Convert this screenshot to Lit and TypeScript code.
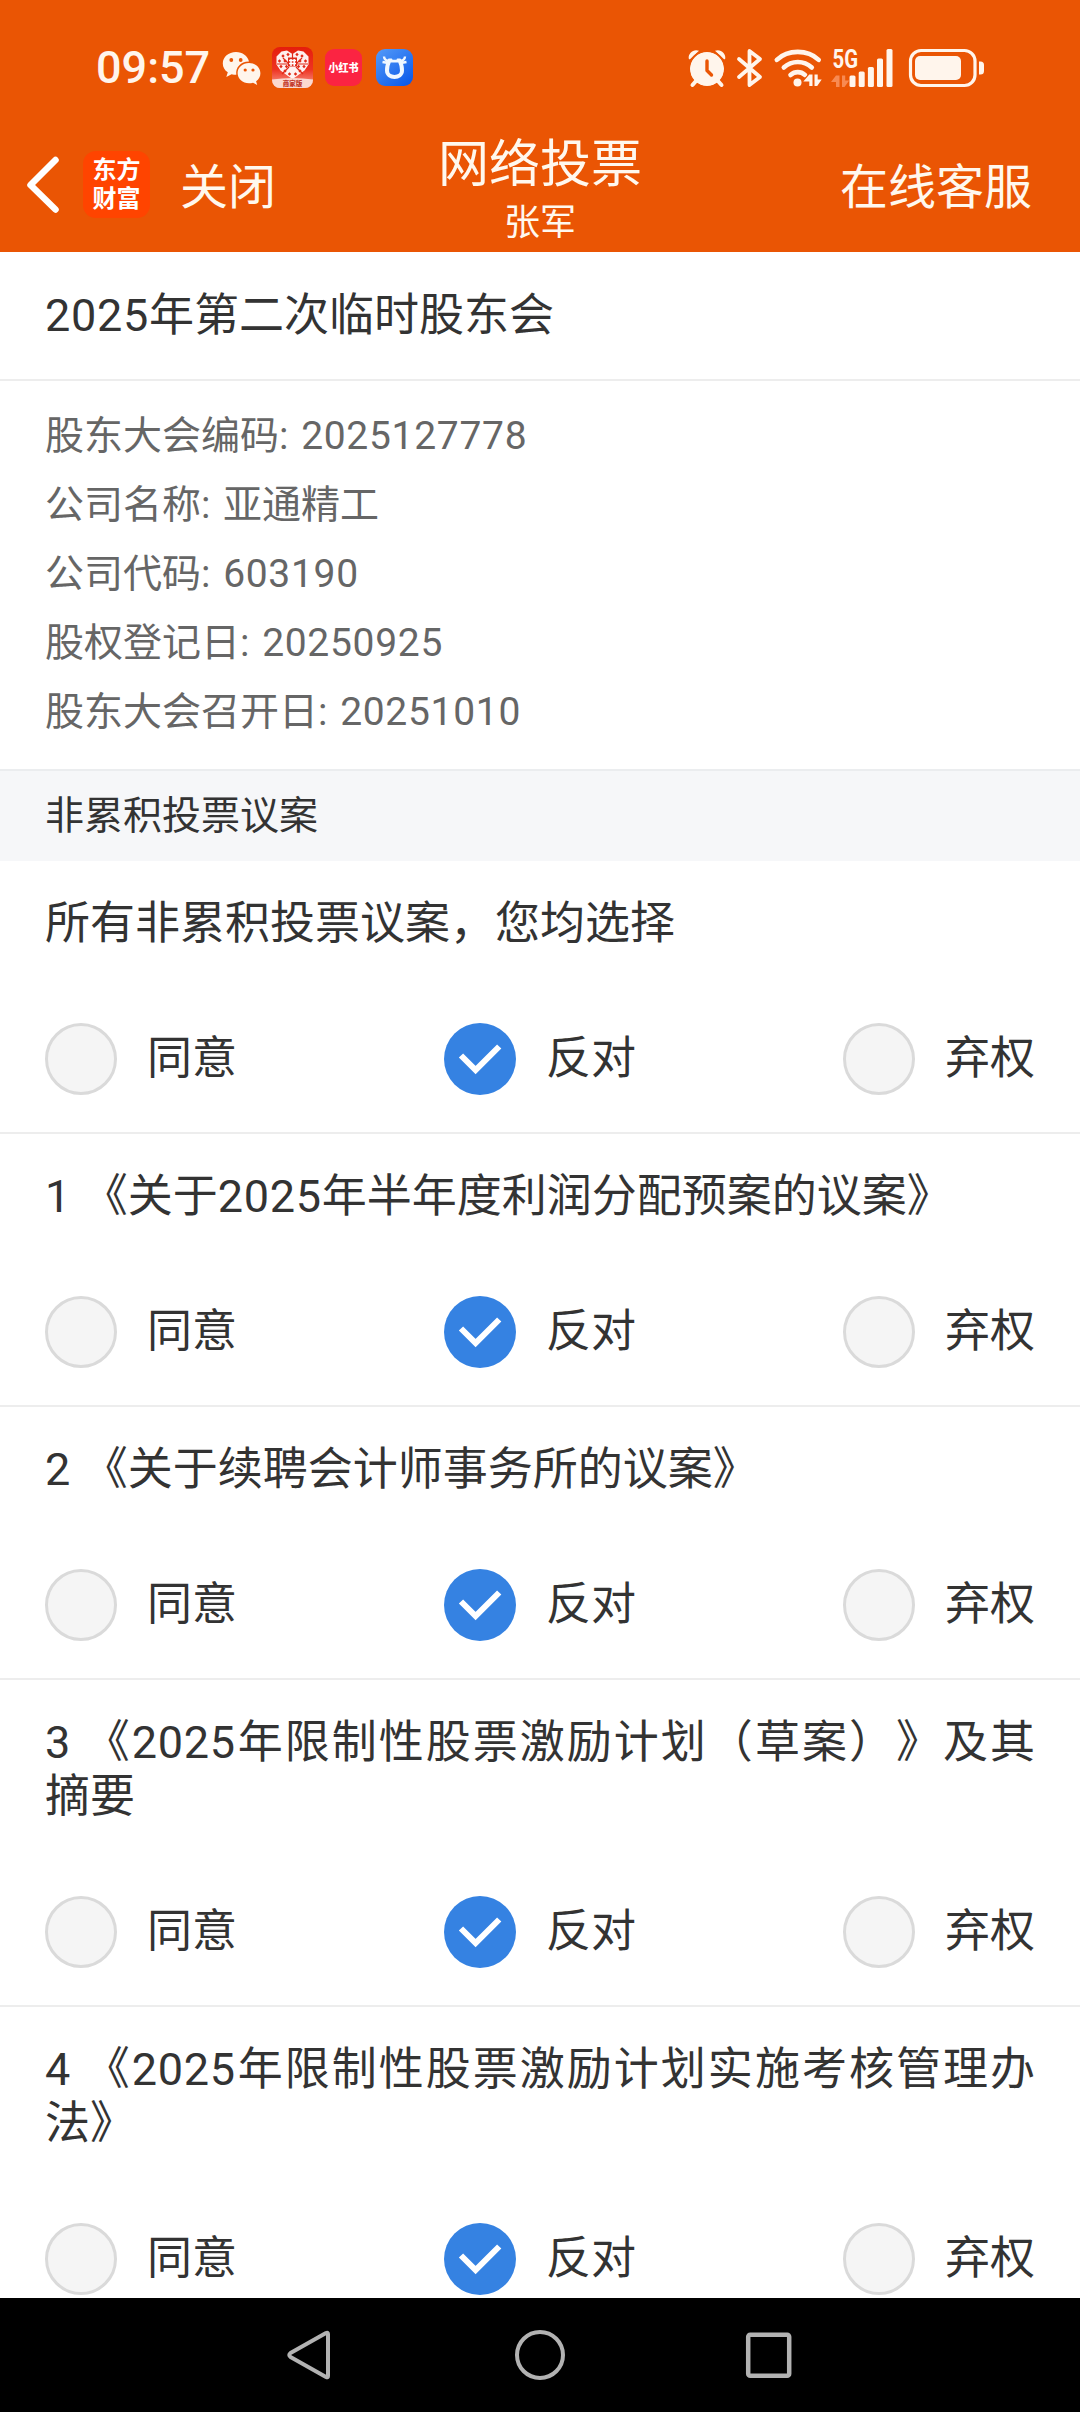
import { LitElement, html, css, svg } from "lit";
import { customElement, property, state } from "lit/decorators.js";
import { classMap } from "lit/directives/class-map.js";

const CHOICES = ["同意", "反对", "弃权"];

const mixed = (text: string) =>
  text
    .split(/([0-9]+)/)
    .filter((part) => part !== "")
    .map((part) => (/^[0-9]/.test(part) ? html`<span class="num">${part}</span>` : part));

@customElement("status-bar")
class StatusBar extends LitElement {
  static styles = css`
    :host {
      display: flex;
      align-items: center;
      height: 135px;
      padding: 0 95px 0 96px;
      box-sizing: border-box;
      color: #fff5ec;
      font-family: Roboto, "Noto Sans CJK SC", sans-serif;
    }
    .time {
      width: 126px;
      font-size: 45px;
      font-weight: 500;
      line-height: 60px;
      padding-top: 1px;
    }
    .apps,
    .signals {
      display: flex;
      align-items: center;
    }
    .signals {
      margin-left: auto;
    }
    .wechat { margin-right: 11px; }
    .pdd { margin-right: 12px; }
    .xhs { margin-right: 14px; }
    .alarm { margin-right: 11px; }
    .bt { margin-right: 11px; }
    .wifi { margin-right: 9px; }
    .cell { margin-right: 15px; }
    svg {
      display: block;
      overflow: visible;
    }
    .label {
      font-family: "Noto Sans CJK SC", sans-serif;
      font-weight: 900;
    }
    .net {
      font-family: Roboto, sans-serif;
      font-weight: 700;
    }
  `;

  render() {
    const petals = [
      [11, 9], [16, 7.5], [25, 7.5], [30, 9], [7.5, 14], [13, 14], [28, 14], [33.5, 14],
      [9, 19.5], [14.5, 19.5], [26.500, 19.5], [32, 19.5], [13, 24], [28, 24], [17.5, 27], [23.5, 27],
    ];
    return html`
      <div class="time">09:57</div>
      <div class="apps">
        <svg class="wechat" width="39" height="40" viewBox="0 0 39 40">
          <path fill="#fff5ec" d="M14 4C6.500 4 .8 9 .8 15.400c0 3.700 1.900 6.800 5 8.900L4.300 29l5.300-2.800c1.700.5 3.100.6 4.700.6-.9-7.300 4.400-13.300 12.700-13.200C25.700 7.900 20.500 4 14 4z"/>
          <path fill="#fff5ec" d="M27 15c-6.400 0-11.400 4.400-11.400 10.100S20.600 35.300 27 35.300c1.400 0 2.700-.2 4-.6l4.200 2.200-1.100-3.700c2.700-1.900 4.300-4.700 4.300-8C38.400 19.400 33.400 15 27 15z"/>
          <g fill="#ea5504"><circle cx="9.300" cy="12" r="1.900"/><circle cx="18.700" cy="12" r="1.900"/><circle cx="23.200" cy="22" r="1.600"/><circle cx="31" cy="22" r="1.600"/></g>
        </svg>
        <svg class="pdd" width="41" height="41" viewBox="0 0 41 41">
          <defs>
            <linearGradient id="pddbg" x1="0" y1="0" x2="0" y2="1"><stop offset="0" stop-color="#e51d0c"/><stop offset=".55" stop-color="#ee3322"/><stop offset="1" stop-color="#f9a595"/></linearGradient>
            <clipPath id="pddclip"><rect width="41" height="41" rx="8"/></clipPath>
          </defs>
          <g clip-path="url(#pddclip)">
            <rect width="41" height="41" fill="url(#pddbg)"/>
            <path fill="#fff" opacity=".93" d="M20.500 7L15 3.500 9.500 4.500 4.500 9.500v8l4 6 7.500 5.500 4.500 3 4.500-3 7.500-5.500 4-6v-8l-5-5L26 3.500z"/>
            <g fill="#e02a18">${petals.map(([x, y]) => svg`<path d="M${x} ${y - 1.7}L${x + 1.7} ${y}L${x} ${y + 1.7}L${x - 1.7} ${y}z"/>`)}</g>
            <path stroke="#e02a18" stroke-width="1.200" fill="none" d="M20.500 4v7M11 11l5 5M30 11l-5 5M5 17h11M25 17h11M17 20l-7 7M24 20l7 7"/>
            <rect x="16" y="10.500" width="9" height="9" fill="#e02a18"/>
            <path stroke="#fff" stroke-width="1.500" fill="none" d="M17 13.500h7M17 16.500h7M19 12v7M22.200 12v7"/>
            <path fill="#fbd9d0" d="M0 32.500q20.500-3 41 0V41H0z"/>
            <text class="label" x="20.500" y="38.800" font-size="6.500" text-anchor="middle" fill="#c2382b">商家版</text>
          </g>
        </svg>
        <svg class="xhs" width="37" height="37" viewBox="0 0 37 37">
          <rect width="37" height="37" rx="9" fill="#fb2442"/>
          <text class="label" x="3.500" y="22.800" font-size="11" textLength="30" lengthAdjust="spacingAndGlyphs" fill="#fff">小红书</text>
        </svg>
        <svg width="37" height="37" viewBox="0 0 37 37">
          <defs><linearGradient id="ubg" x1="0" y1="0" x2=".8" y2="1"><stop offset="0" stop-color="#559bf8"/><stop offset="1" stop-color="#0d5bea"/></linearGradient></defs>
          <rect width="37" height="37" rx="9" fill="url(#ubg)"/>
          <path fill="none" stroke="#f0f7ff" stroke-width="4" stroke-linejoin="round" d="M13.300 11.500h10.400c1.500 3.500 2.500 6.500 2.300 10 0 8.500-15 8.500-15 0-.2-3.500.8-6.500 2.300-10z"/>
          <path fill="none" stroke="#f0f7ff" stroke-width="2.400" d="M8 7.500q.3 4.500 6 4.500M29 7.500q-.3 4.500-6 4.500M6.500 13l6 1M30.500 13l-6 1"/>
          <path fill="#3a86f5" d="M15.500 8.500h6l-1 2.300h-4z"/>
        </svg>
      </div>
      <div class="signals">
        <svg class="alarm" width="38" height="38" viewBox="0 0 38 38">
          <g fill="#fff5ec">
            <circle cx="19" cy="20" r="17"/>
            <path d="M.7 9.500C.3 4 5.500-.3 11 1.800L1.700 10.500zM37.300 9.500C37.700 4 32.500-.3 27 1.800l9.300 8.700z"/>
          </g>
          <circle cx="19" cy="20" r="18" fill="none" stroke="#ea5504" stroke-width="1.600"/>
          <path stroke="#fff5ec" stroke-width="4" stroke-linecap="round" d="M8 32l-3.500 4M30 32l3.500 4"/>
          <path stroke="#ea5504" stroke-width="3.400" stroke-linecap="round" stroke-linejoin="round" fill="none" d="M19 12v9.500l4.500 4.500"/>
        </svg>
        <svg class="bt" width="26" height="38" viewBox="0 0 26 38">
          <path fill="none" stroke="#fff5ec" stroke-width="3.800" stroke-linejoin="round" stroke-linecap="round" d="M2 10l21 18-10.500 8V2L23 10 2 28"/>
        </svg>
        <svg class="wifi" width="48" height="38" viewBox="0 0 48 38">
          <g fill="none" stroke="#fff5ec" stroke-width="4.600" stroke-linecap="round">
            <path d="M2.800 10.800C14 .2 33.500.2 44.700 10.800"/><path d="M9.800 18.500c8-7.300 20-7.300 28 0"/><path d="M16.500 26c4.300-3.800 10.200-3.800 14.500 0"/>
          </g>
          <circle cx="23.500" cy="33.500" r="4" fill="#fff5ec"/>
          <path fill="#ea5504" d="M29 31l8-9h11v16H30z"/>
          <path fill="#fff5ec" d="M35.300 25.500h3.200V37h-3.200v-4.500h-6zM40.500 25.500h3.200v5h4l-4.500 6.500h-2.700z"/>
        </svg>
        <svg class="cell" width="63" height="38" viewBox="0 0 63 38">
          <text class="net" x="1.500" y="18.500" font-size="25.500" textLength="25.500" lengthAdjust="spacingAndGlyphs" fill="#fff5ec">5G</text>
          <path fill="#f88a52" d="M5 26.500h3.500V38H5v-5H0zM11 26.500h3.200v5h4L13.500 38H11z"/>
          <g fill="#fff5ec">
            <rect x="18.500" y="26.500" width="6" height="11.500" rx="1.500"/><rect x="27.700" y="22.500" width="6" height="15.500" rx="1.500"/><rect x="36.900" y="18" width="6" height="20" rx="1.500"/><rect x="46" y="9.500" width="6" height="28.500" rx="1.500"/><rect x="55.500" y="0" width="6" height="38" rx="1.500"/>
          </g>
        </svg>
        <svg width="76" height="38" viewBox="0 0 76 38">
          <rect x="1.500" y="1.500" width="64.500" height="35" rx="10.500" fill="none" stroke="#fff5ec" stroke-width="3.200"/>
          <rect x="6" y="7" width="46" height="24" rx="5" fill="#fff5ec"/>
          <path fill="#fff5ec" d="M70 12.500h1.500a3.500 3.500 0 0 1 3.500 3.500v6a3.500 3.500 0 0 1-3.500 3.500H70z"/>
        </svg>
      </div>
    `;
  }
}

@customElement("title-bar")
class TitleBar extends LitElement {
  static styles = css`
    :host {
      display: grid;
      grid-template-columns: 1fr auto 1fr;
      align-items: start;
      height: 117px;
      color: #fff8ee;
      font-family: "Noto Sans CJK SC", sans-serif;
    }
    .left {
      display: flex;
      align-items: flex-start;
      padding: 16px 0 0 25px;
    }
    .back {
      margin: 4px 23px 0 0;
    }
    .logo {
      box-sizing: border-box;
      display: flex;
      flex-direction: column;
      align-items: center;
      width: 67px;
      height: 67px;
      margin-right: 30px;
      padding-top: 2px;
      border-radius: 13px;
      background: #ff4400;
      color: #fff;
      font-size: 24px;
      font-weight: 700;
      line-height: 29px;
    }
    .action {
      font-size: 48px;
      line-height: 64px;
    }
    .right {
      padding: 16px 48px 0 0;
      text-align: right;
    }
    .center {
      display: flex;
      flex-direction: column;
      align-items: center;
      margin-top: -6px;
    }
    .title {
      font-size: 51px;
      line-height: 62px;
    }
    .user {
      font-size: 36px;
      line-height: 56px;
    }
  `;

  render() {
    return html`
      <div class="left">
        <svg class="back" width="35" height="58" viewBox="0 0 35 58">
          <path d="M30.500 5L5.500 30l25 24.500" fill="none" stroke="#fff" stroke-width="6.500" stroke-linecap="round" stroke-linejoin="round"/>
        </svg>
        <div class="logo"><span>东方</span><span>财富</span></div>
        <span class="action">关闭</span>
      </div>
      <div class="center">
        <span class="title">网络投票</span>
        <span class="user">张军</span>
      </div>
      <div class="right action">在线客服</div>
    `;
  }
}

@customElement("vote-item")
class VoteItem extends LitElement {
  @property() text = "";
  @state() private selected = 1;

  static styles = css`
    :host {
      display: block;
      flex: none;
      padding: 36px 45px 37px;
      border-bottom: 2px solid #ededed;
      color: #333;
      font-family: Roboto, "Noto Sans CJK SC", sans-serif;
      font-size: 45px;
      text-spacing-trim: space-all;
    }
    .text {
      line-height: 54px;
      text-align: justify;
      word-spacing: 0.500px;
    }
    .num {
      letter-spacing: 0.7px;
    }
    .choices {
      display: flex;
      justify-content: space-between;
      margin-top: 72px;
    }
    .choice {
      display: flex;
      align-items: center;
      gap: 30px;
      height: 72px;
      line-height: 74px;
    }
    .dot {
      box-sizing: border-box;
      width: 72px;
      height: 72px;
      border: 3px solid #dadada;
      border-radius: 50%;
      background: #f5f5f5;
    }
    .dot.on {
      border: 0;
      background: #3582e2;
    }
    svg {
      display: block;
    }
  `;

  render() {
    return html`
      <div class="text">${mixed(this.text)}</div>
      <div class="choices">
        ${CHOICES.map(
          (label, i) => html`
            <div class="choice" @click=${() => (this.selected = i)}>
              <span class=${classMap({ dot: true, on: i === this.selected })}>
                ${i === this.selected
                  ? html`<svg width="72" height="72" viewBox="0 0 72 72"><path d="M17 32.500l14.600 14.600L55.200 23.500" fill="none" stroke="#fff" stroke-width="6"/></svg>`
                  : null}
              </span>
              <span>${label}</span>
            </div>
          `
        )}
      </div>
    `;
  }
}

@customElement("nav-bar")
class NavBar extends LitElement {
  static styles = css`
    :host {
      display: flex;
      flex: none;
      align-items: center;
      justify-content: center;
      gap: 177px;
      height: 114px;
      background: #000;
    }
  `;

  render() {
    return html`
      <svg width="52" height="52" viewBox="0 0 52 52">
        <path d="M43 5v42q0 2-2 1L5.500 28q-2.500-2 0-4L41 4q2-1 2 1z" fill="none" stroke="#b2b2b2" stroke-width="4" stroke-linejoin="round"/>
      </svg>
      <svg width="52" height="52" viewBox="0 0 52 52">
        <circle cx="26" cy="26" r="23" fill="none" stroke="#b2b2b2" stroke-width="4"/>
      </svg>
      <svg width="52" height="52" viewBox="0 0 52 52">
        <rect x="5.200" y="5.700" width="41" height="41" rx="2" fill="none" stroke="#b2b2b2" stroke-width="4.500"/>
      </svg>
    `;
  }
}

@customElement("app-root")
class AppRoot extends LitElement {
  private info = [
    "股东大会编码: 2025127778",
    "公司名称: 亚通精工",
    "公司代码: 603190",
    "股权登记日: 20250925",
    "股东大会召开日: 20251010",
  ];

  private items = [
    "所有非累积投票议案，您均选择",
    "1 《关于2025年半年度利润分配预案的议案》",
    "2 《关于续聘会计师事务所的议案》",
    "3 《2025年限制性股票激励计划（草案）》及其摘要",
    "4 《2025年限制性股票激励计划实施考核管理办法》",
  ];

  static styles = css`
    :host {
      display: flex;
      flex-direction: column;
      width: 1080px;
      height: 2412px;
      overflow: hidden;
      background: #fff;
      color: #333;
      font-family: Roboto, "Noto Sans CJK SC", sans-serif;
    }
    .top {
      flex: none;
      background: #ea5504;
    }
    .content {
      display: flex;
      flex: 1;
      flex-direction: column;
      min-height: 0;
      overflow: hidden;
    }
    .meeting {
      flex: none;
      box-sizing: border-box;
      height: 129px;
      padding: 0 45px;
      border-bottom: 2px solid #ededed;
      font-size: 45px;
      line-height: 127px;
    }
    .info {
      flex: none;
      box-sizing: border-box;
      height: 390px;
      padding: 21px 45px 0;
      border-bottom: 2px solid #ebedef;
      color: #666;
      font-size: 39px;
      line-height: 69px;
      word-spacing: 3px;
    }
    .section {
      flex: none;
      height: 90px;
      padding: 0 45px;
      background: #f6f7f9;
      font-size: 39px;
      line-height: 91px;
    }
    .num {
      letter-spacing: 0.7px;
    }
  `;

  render() {
    return html`
      <div class="top">
        <status-bar></status-bar>
        <title-bar></title-bar>
      </div>
      <div class="content">
        <div class="meeting">${mixed("2025年第二次临时股东会")}</div>
        <div class="info">${this.info.map((line) => html`<div>${mixed(line)}</div>`)}</div>
        <div class="section">非累积投票议案</div>
        ${this.items.map((text) => html`<vote-item .text=${text}></vote-item>`)}
      </div>
      <nav-bar></nav-bar>
    `;
  }
}
